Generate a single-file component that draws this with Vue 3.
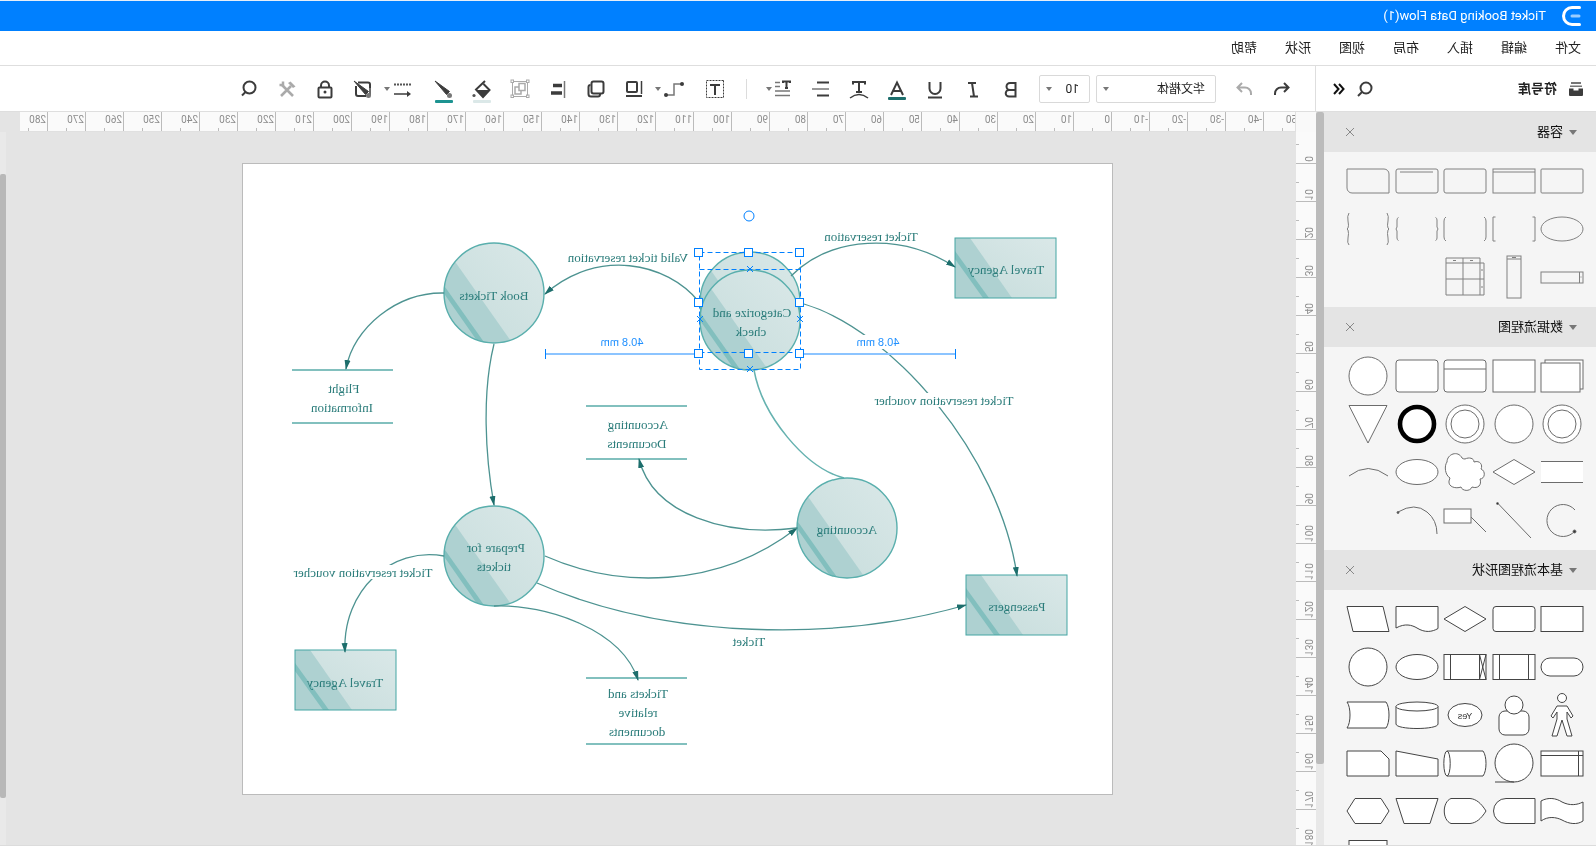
<script setup>
const menus = ['文件', '编辑', '插入', '布局', '视图', '形状', '帮助']

const R = (x, y, w, h, rx = 0) => `<rect x="${x}" y="${y}" width="${w}" height="${h}" rx="${rx}"/>`
const C = (r, x = 24, y = 24) => `<circle cx="${x}" cy="${y}" r="${r}"/>`
const E = (rx, ry, x = 24, y = 24) => `<ellipse cx="${x}" cy="${y}" rx="${rx}" ry="${ry}"/>`
const P = (d) => `<path d="${d}"/>`
const L = (d) => `<path fill="none" d="${d}"/>`

const sections = [
  {
    title: '容器',
    kind: 'hollow',
    shapes: [
      R(3, 12, 42, 24, 1),
      R(3, 12, 42, 24) + L('M3 15H45'),
      R(3, 12, 42, 24, 2),
      R(3, 12, 42, 24, 2) + L('M8 15H41'),
      P('M8 12H45V31a5 5 0 0 1-5 5H3V17a5 5 0 0 1 5-5z'),
      E(21, 12),
      L('M5.500 12H3V36H5.500M42.500 12H45V36H42.500'),
      L('M5 12Q3 13 3 16V32Q3 35 5 36M43 12Q45 13 45 16V32Q45 35 43 36'),
      L('M5.500 12.500Q4 13 4 15V22L3 24L4 26V33Q4 35 5.500 35.500M42.500 12.500Q44 13 44 15V22L45 24L44 26V33Q44 35 42.500 35.500'),
      L('M5 8Q3 11 4 16T4 23L3 24L4 25Q5 28 4 33T5 40M43 8Q45 11 44 16T44 23L45 24L44 25Q43 28 44 33T43 40'),
      R(3, 19, 42, 11) + L('M6.500 19V30M4.500 24h1'),
      R(17, 3, 14, 42) + L('M17 6H31M22 4.500h4'),
      L('M9 5H43V42H5V10H43M9 5V42M26 5V42M5 26H43M16 7.500h3M33 7.500h3M7 16v2M7 33v2'),
    ],
  },
  {
    title: '数据流程图',
    kind: 'soft',
    shapes: [
      R(3, 8, 38, 29) + R(6, 11, 39, 29),
      R(3, 8, 42, 32),
      R(3, 8, 42, 32, 3) + L('M3 17H45'),
      R(3, 8, 42, 32, 3),
      C(19),
      C(19) + C(14),
      C(19),
      C(19) + C(14),
      '<circle cx="24" cy="24" r="17" stroke="#000" stroke-width="4.600"/>',
      P('M5 5.500H43L24 43z'),
      '<rect x="3" y="13" width="42" height="22" stroke="none"/>' + L('M3 13.500H45M3 34.500H45'),
      P('M24 11.500L45 24L24 36.500L3 24z'),
      P('M24 11C20 9 15 10 15 14C9 12 6 17 8 21C3 23 4 31 9 31C7 37 11 41 17 39C19 44 27 43 28 39C33 41 41 39 40 33L39 30C44 27 45 18 42 14C42 6 31 2 27 10Q26 11 24 11z'),
      E(21, 12.5),
      L('M4 28Q24 13 43 28'),
      L('M11 14A16 16 0 1 1 11 35') + '<circle cx="11.500" cy="35.500" r="1.500" fill="#333"/>',
      L('M40 7.500L7 42') + '<circle cx="40.500" cy="7.500" r="1" fill="#333"/>',
      R(18, 13, 27, 14) + L('M18 21L3 36'),
      L('M43 16Q26 6 14 16Q4 24 4 38') + '<circle cx="43" cy="16.500" r="1" fill="#333"/>',
    ],
  },
  {
    title: '基本流程图形状',
    kind: 'strong',
    shapes: [
      R(3, 11.5, 42, 25),
      R(3, 11.5, 42, 25, 3),
      P('M24 11.500L45 24L24 36.500L3 24z'),
      P('M3 11.500H45V33C36 28 29 30 24 33C16 38 9 37 3 33.500z'),
      P('M9 11.500H45L39 36.500H3z'),
      R(3, 15, 42, 18, 9),
      R(3, 11.5, 42, 25) + L('M9.500 11.500V36.500M38.500 11.500V36.500'),
      R(3, 11.5, 42, 25) + L('M9.500 11.500V36.500M38.500 11.500V36.500M3 11.500L9.500 36.500M9.500 11.500L3 36.500'),
      E(21, 12.5),
      C(19),
      P('M19 15H29L35 25L33 27L29 21V28L34 45H29L24 29L19 45H14L19 28V21L15 27L13 25z') + C(4.5, 24, 7),
      R(9, 20, 30, 24, 6) + C(9, 24, 14),
      E(17, 11.5) + '<text x="24" y="28" text-anchor="middle" font-size="9" fill="#333" stroke="none">Yes</text>',
      P('M3 15.500V33C3 39 45 39 45 33V15.500') + E(21, 4.5, 24, 15.5),
      P('M6 11H45C41 16 41 32 45 37H6C2 32 2 16 6 11z'),
      R(3, 12, 42, 25) + L('M7.500 12V37M3 16.500H45'),
      C(19) + L('M24 43H43'),
      P('M6 12H42V37H6C2 32 2 17 6 12z') + E(3.2, 12.5, 42, 24.5),
      P('M3 20L45 12V37H3z'),
      P('M11 12H45V37H3V20z'),
      P('M45 14C38 10 30 11 24 15C16 19 9 18 3 15V34C9 38 17 37 24 33C30 30 38 29 45 34z'),
      P('M3 11.500H32A12.500 12.500 0 0 1 32 36.500H3z'),
      P('M3 24C8 16 13 12 19 11.500H38C47 15 47 33 38 36.500H19C13 36 8 32 3 24z'),
      P('M3 11.500H45L37 36.500H11z'),
      P('M11 11.500H37L45 24L37 36.500H11L3 24z'),
      R(3, 11.5, 42, 25),
      R(3, 11.5, 42, 25),
      R(3, 11.5, 42, 25),
      R(3, 11.5, 42, 25),
      R(5, 5.5, 38, 38),
    ],
  },
]

const brush = '<path d="M21 4L9.500 17.500L6.500 14.500z" fill="#3c3c3c" stroke="#3c3c3c" stroke-width="1"/><circle cx="6.500" cy="18.500" r="2.500" fill="#777" stroke="none"/>'
const textTools = [
  { name: '加粗', art: '<path d="M7.500 6H13a3.500 3.500 0 0 1 0 7H7.500zM7.500 13H14a3.300 3.300 0 0 1 0 6.600H7.500z"/>' },
  { name: '斜体', art: '<path d="M9 6h8M7 19.500h8M13 6l-2 13.500"/>' },
  { name: '下划线', art: '<path d="M6.500 5v6.500a5.500 5.500 0 0 0 11 0V5M5 20.500h14"/>' },
  { name: '字体颜色', art: '<path d="M6 18L12 5.500L18 18M8 14h8"/><rect x="3" y="20" width="18" height="3" rx="1" fill="#1d6e6c" stroke="none"/>' },
  { name: '文字效果', art: '<path d="M6 7.500V5H18V7.500M12 5V15M9 15h6" /><path d="M3 21Q12 14 21 21" stroke-width="1.500"/>' },
  { name: '对齐', art: '<path d="M4 5.500H16M4 18.500H16"/><path d="M4 12H21" stroke="#777" stroke-width="1.500"/>' },
  { name: '行距', caret: true, art: '<path d="M5 6V4.500H12V6M8.500 5V11M7 11h3"/><path d="M15 5.500h5M15 9.500h5M5 14H20M5 18.500H20" stroke="#777" stroke-width="1.500"/>' },
]
const shapeTools = [
  { name: '文本框', art: '<rect x="3.500" y="3.500" width="17" height="17" stroke-width="1" stroke-dasharray="2 1"/><path d="M7 8h10M12 8v10"/>' },
  { name: '连接线', caret: true, wide: true, art: '<path d="M5 7H12V18H19" stroke="#777" stroke-width="1.500"/><circle cx="4" cy="7" r="2" fill="#3c3c3c" stroke="none"/><circle cx="20" cy="18" r="2" fill="#3c3c3c" stroke="none"/>' },
  { name: '层叠', art: '<rect x="9" y="5" width="10" height="10" rx="1"/><path d="M4.500 4V17" stroke-width="1.500"/><path d="M4 19H20"/>' },
  { name: '排列', art: '<rect x="4.500" y="4.500" width="12" height="12" rx="2"/><path d="M8 16.500V17.500a2 2 0 0 0 2 2H17a2.500 2.500 0 0 0 2.500-2.500V10a2 2 0 0 0-2-2"/>' },
  { name: '左对齐', art: '<path d="M5.500 4V21" stroke="#777" stroke-width="1.500"/><path d="M8 8.500H17M8 16H19" stroke-width="3.600"/>' },
  { name: '组合', off: true, art: '<path d="M5.500 4.500H18.500M5.500 19.500H18.500M4.500 5.500V18.500M19.500 5.500V18.500" stroke-width="1"/><rect x="3" y="3" width="2.500" height="2.500" stroke-width="1"/><rect x="18.500" y="3" width="2.500" height="2.500" stroke-width="1"/><rect x="3" y="18" width="2.500" height="2.500" stroke-width="1"/><rect x="18.500" y="18" width="2.500" height="2.500" stroke-width="1"/><rect x="7" y="6.500" width="6" height="7" stroke-width="1.500"/><path d="M13 10H17V17H11V13.500" stroke-width="1.500"/>' },
  { name: '填充', art: '<path d="M9 4L18 12.500L11 20L4.500 13L10.500 7"/><path d="M4 13H18L11 20.500z" fill="#3c3c3c" stroke="none"/><circle cx="20" cy="18.500" r="1.600" fill="#555" stroke="none"/><rect x="3" y="23" width="18" height="3" rx="1" fill="#dbe8e8" stroke="none"/>' },
  { name: '线条颜色', art: brush + '<rect x="3" y="23" width="18" height="3" rx="1" fill="#1d9391" stroke="none"/>' },
  { name: '线条样式', caret: true, wide: true, art: '<path d="M4 7.500H21" stroke-dasharray="2 1" stroke="#555"/><path d="M6 17H21" stroke-width="1.500"/><path d="M4 17L8 14V20z" fill="#3c3c3c" stroke="none"/>' },
  { name: '格式刷', art: '<path d="M17 5.500H7a2 2 0 0 0-2 2V11M19 9V17a2 2 0 0 1-2 2H9"/><path d="M5 11V18M9 19H16" stroke-width="1.500"/>' + brush },
  { name: '锁定', art: '<rect x="5.500" y="10.500" width="13" height="10" rx="1"/><path d="M8 10V8.500a4 4 0 0 1 8 0V10"/><circle cx="12" cy="15" r="1.500" fill="#3c3c3c" stroke="none"/>' },
  { name: '工具', off: true, art: '<path d="M6 19L17 8M8 9L18 19" stroke-width="2.600"/><path d="M3.500 9.500L8.500 4.500L11 6L6 11z" fill="#aaa" stroke="none"/><path d="M16 4.500V8H19.500" stroke-width="2.500"/>' },
  { name: '查找', art: '<circle cx="11.500" cy="10.500" r="6"/><path d="M15.500 15L19 18.500"/>' },
]

const hTicks = Array.from({ length: 34 }, (_, i) => (i - 5) * 10)
const vTicks = Array.from({ length: 19 }, (_, i) => i * 10)

const boxes = [
  { x: 541, y: 238 }, { x: 530, y: 575 }, { x: 1201, y: 650 },
]
const rounds = [
  { x: 1103, y: 293 }, { x: 1103, y: 556 }, { x: 750, y: 528 }, { x: 847, y: 302 }, { x: 847, y: 320 },
]
const stores = [
  { x: 1204, y: 370, h: 53 }, { x: 910, y: 406, h: 53 }, { x: 910, y: 678, h: 66 },
]
const flows = [
  'M806 276C766 236 696 232 642 267',
  'M898 302C930 262 1000 248 1052 294',
  'M1153 293C1200 292 1244 328 1251 369',
  'M1103 344C1115 392 1112 455 1103 505',
  'M1153 556C1205 546 1255 590 1252 652',
  'M1103 606C1050 604 975 630 959 680',
  'M1060 583C930 640 760 642 631 605',
  'M1052 556C980 588 880 590 800 528',
  'M800 528C870 537 944 515 958 459',
  'M793 304C705 330 597 455 580 576',
]
const plates = [
  { x: 583, y: 393, w: 140, h: 14 }, { x: 1163, y: 565, w: 140, h: 14 }, { x: 697, y: 335, w: 44, h: 14 },
]
const labels = [
  [591, 274, 'Travel Agency'], [726, 241, 'Ticket reservation'], [845, 317, 'Categorize and'], [846, 336, 'check'],
  [969, 262, 'Valid ticket reservation'], [1103, 300, 'Book Tickets'], [1253, 393, 'Flight'], [1255, 412, 'Information'],
  [959, 429, 'Accounting'], [960, 448, 'Documents'], [653, 405, 'Ticket reservation voucher'], [750, 534, 'Accounting'],
  [1101, 552, 'Prepare for'], [1103, 571, 'tickets'], [1234, 577, 'Ticket reservation voucher'], [1252, 687, 'Travel Agency'],
  [580, 611, 'Passengers'], [848, 646, 'Ticket'], [959, 698, 'Tickets and'], [959, 717, 'relative'], [960, 736, 'documents'],
]
const handles = [797, 848, 898].flatMap((x) => [252, 302, 353].map((y) => ({ x, y }))).filter((h) => h.x !== 848 || h.y !== 302)
const crosses = [[847, 269], [897, 319], [797, 319], [847, 369]]
</script>

<template>
  <div class="app">
    <header class="titlebar">
      <svg class="logo" width="20" height="20" viewBox="0 0 20 20" fill="none" stroke-width="3" stroke-linecap="round">
        <path d="M1.500 1.500H9a8.500 8.500 0 0 1 0 17H1.500" stroke="#fff" />
        <path d="M2 10H9" stroke="#99ccff" />
      </svg>
      <span>Ticket Booking Data Flow(1)</span>
    </header>

    <nav class="menubar">
      <button v-for="m in menus" :key="m" type="button">{{ m }}</button>
    </nav>

    <div class="tools">
      <div class="library-bar">
        <svg class="drawer" width="14" height="14" viewBox="0 0 14 14" fill="#3c3c3c">
          <path d="M2 0h10v2H2zM1 3.500h12v1.500H1z" fill="#777" />
          <path d="M0 6.500h4.500v2h5v-2H14V13a1 1 0 0 1-1 1H1a1 1 0 0 1-1-1z" />
        </svg>
        <h1>符号库</h1>
        <button type="button" aria-label="搜索符号">
          <svg width="16" height="16" viewBox="0 0 16 16" fill="none" stroke="#3c3c3c" stroke-width="2"><circle cx="7" cy="7" r="5.500" /><path d="M11 11l4 4" /></svg>
        </button>
        <button type="button" aria-label="收起">
          <svg width="12" height="12" viewBox="0 0 12 12" fill="none" stroke="#111" stroke-width="2"><path d="M6 1L1.500 6L6 11M11 1L6.500 6L11 11" /></svg>
        </button>
      </div>
      <div class="toolbar">
        <button type="button" class="tool" aria-label="撤销">
          <svg viewBox="0 0 24 24"><path d="M10 6L5.500 10.500L10 15M5.500 10.500H13a6 6 0 0 1 6 6V18" /></svg>
        </button>
        <button type="button" class="tool off" aria-label="重做">
          <svg viewBox="0 0 24 24"><path d="M14 6L18.500 10.500L14 15M18.500 10.500H11a6 6 0 0 0-6 6V18" /></svg>
        </button>
        <label class="pick family">
          <select aria-label="字体"><option>华文楷体</option></select><i class="caret"></i>
        </label>
        <label class="pick size">
          <select aria-label="字号"><option>10</option></select><i class="caret"></i>
        </label>
        <button v-for="t in textTools" :key="t.name" type="button" class="tool" :aria-label="t.name">
          <svg viewBox="0 0 24 24" v-html="t.art"></svg><i v-if="t.caret" class="caret"></i>
        </button>
        <span class="divider"></span>
        <button v-for="t in shapeTools" :key="t.name" type="button" class="tool" :class="{ off: t.off, wide: t.wide }" :aria-label="t.name">
          <svg viewBox="0 0 24 24" v-html="t.art"></svg><i v-if="t.caret" class="caret"></i>
        </button>
      </div>
    </div>

    <main class="work">
      <aside class="library">
        <div class="library-list">
          <section v-for="s in sections" :key="s.title">
            <div class="section-head">
              <button type="button" class="fold"><i class="caret"></i>{{ s.title }}</button>
              <button type="button" class="close" aria-label="关闭">
                <svg width="8" height="8" viewBox="0 0 8 8" stroke="#888"><path d="M0 0L8 8M8 0L0 8" /></svg>
              </button>
            </div>
            <div class="shapes" :class="s.kind">
              <svg v-for="(a, i) in s.shapes" :key="i" width="48" height="48" viewBox="0 0 48 48" v-html="a"></svg>
            </div>
          </section>
        </div>
        <div class="rail"><div class="library-thumb"></div></div>
      </aside>

      <div class="ruler-corner"></div>
      <div class="ruler-h">
        <span v-for="n in hTicks" :key="n"><b>{{ n }}</b></span>
      </div>
      <div class="ruler-v">
        <span v-for="n in vTicks" :key="n"><b>{{ n }}</b></span>
      </div>

      <div class="canvas">
        <svg class="page" width="869" height="630" viewBox="485 164 869 630">
          <defs>
            <linearGradient id="glass" x1="0" y1="0" x2="1" y2="1"><stop offset="0" stop-color="#dae8e8" /><stop offset="1" stop-color="#c5dcdb" /></linearGradient>
            <clipPath id="disc"><circle r="50" /></clipPath>
            <marker id="tip" orient="auto" markerUnits="userSpaceOnUse" markerWidth="12" markerHeight="8" refX="9" refY="4"><path d="M0 1L10 4L0 7z" fill="#1d6e6c" /></marker>
          </defs>

          <path d="M843 370C835 415 792 468 753 478" fill="none" stroke="#66b2b0" stroke-width="1.500" />
          <g v-for="(b, i) in boxes" :key="'b' + i" :transform="`translate(${b.x} ${b.y})`">
            <rect width="101" height="60" fill="url(#glass)" />
            <path d="M86 0H101V60H44z" fill="#aed1d1" />
            <path d="M101 13V21L73 60H67z" fill="#82bfbe" />
            <rect width="101" height="60" fill="none" stroke="#45a5a3" />
          </g>
          <g v-for="(c, i) in rounds" :key="'c' + i" :transform="`translate(${c.x} ${c.y})`">
            <circle r="50" fill="url(#glass)" />
            <g clip-path="url(#disc)">
              <path d="M38 -30L51 -48V51H-19z" fill="#aed1d1" />
              <path d="M51 -9V-1L14 52H8z" fill="#82bfbe" />
            </g>
            <circle r="50" fill="none" stroke="#5aafad" stroke-width="1.400" />
          </g>
          <path v-for="(s, i) in stores" :key="'s' + i" :d="`M${s.x} ${s.y}h101m0 ${s.h}h-101`" stroke="#5aaca9" stroke-width="1.400" fill="none" />
          <path v-for="(f, i) in flows" :key="'f' + i" :d="f" fill="none" stroke="#4d9391" stroke-width="1.300" marker-end="url(#tip)" />

          <g stroke="#8cc4ff" stroke-width="2"><path d="M641 354H793M902 354H1051" /></g>
          <g stroke="#0080ff"><path d="M641.500 349V359M1051.500 349V359" /></g>
          <rect v-for="(p, i) in plates" :key="'p' + i" :x="p.x" :y="p.y" :width="p.w" :height="p.h" fill="#fff" />
          <text v-for="(l, i) in labels" :key="'l' + i" class="label" :x="l[0]" :y="l[1]">{{ l[2] }}</text>
          <text class="measure" x="719" y="346">40.8 mm</text>
          <text class="measure" x="975" y="346">40.8 mm</text>

          <g fill="none" stroke="#0080ff">
            <path d="M796.500 252.500H897.500V369.500H796.500zM796.500 269.500H897.500M796.500 352.500H897.500" stroke-dasharray="5 3" />
            <path v-for="(c, i) in crosses" :key="'x' + i" :d="`M${c[0] - 3} ${c[1] - 3}l6 6m0-6l-6 6`" />
            <circle cx="848" cy="216" r="5" fill="#fff" />
            <rect v-for="(h, i) in handles" :key="'h' + i" :x="h.x - 3.5" :y="h.y - 3.5" width="8" height="8" fill="#fff" />
          </g>
        </svg>
      </div>
      <div class="canvas-rail"><div class="canvas-thumb"></div></div>
    </main>
  </div>
</template>

<style>
html, body { margin: 0; background: #fff; overflow: hidden; }
</style>

<style scoped>
.app {
  display: flex;
  flex-direction: column;
  box-sizing: border-box;
  height: 100vh;
  border-top: 1px solid #e6eef8;
  border-bottom: 1px solid #dcdcdc;
  transform: scaleX(-1);
  color: #222;
  font: 13px/16px Roboto, "Noto Sans CJK SC", sans-serif;
}
button { padding: 0; border: 0; background: none; color: inherit; font: inherit; }
.titlebar {
  display: flex;
  align-items: center;
  gap: 15px;
  height: 30px;
  padding-left: 15px;
  background: #0080ff;
  color: #fff;
}
.menubar {
  display: flex;
  align-items: center;
  gap: 28px;
  height: 34px;
  padding-left: 15px;
  border-bottom: 1px solid #dedede;
}
.tools { display: flex; height: 45px; border-bottom: 1px solid #dedede; }
.library-bar {
  display: flex;
  align-items: center;
  box-sizing: border-box;
  width: 281px;
  padding: 0 17px 0 13px;
  border-right: 1px solid #dedede;
}
.library-bar h1 { flex: 1; margin: 0 0 0 12px; font-size: 13px; font-weight: 700; }
.library-bar button { display: flex; margin-left: 12px; }
.toolbar { display: flex; align-items: center; flex: 1; padding-left: 14px; }
.tool { position: relative; display: flex; align-items: center; justify-content: center; flex: none; width: 38px; height: 30px; }
.tool.wide { width: 43px; }
.tool svg { width: 24px; height: 24px; overflow: visible; fill: none; stroke: #3c3c3c; stroke-width: 2; }
.tool.off svg { stroke: #aaa; }
.caret { width: 0; height: 0; border: 4px solid transparent; border-top: 5px solid #777; border-bottom: 0; }
.toolbar .caret { border-width: 4px 3px 0; }
.tool .caret { position: absolute; right: 2px; top: 13px; }
.pick {
  display: flex;
  align-items: center;
  box-sizing: border-box;
  height: 28px;
  padding: 0 6px 0 10px;
  border: 1px solid #d9d9d9;
  border-radius: 2px;
}
.family { width: 120px; margin-left: 9px; }
.size { width: 51px; margin: 0 9px 0 6px; }
.pick select { flex: 1; width: 20px; appearance: none; padding: 0; border: 0; background: none; color: #222; font: 12px/16px Roboto, "Noto Sans CJK SC", sans-serif; }
.divider { width: 1px; height: 20px; margin: 0 12px 0 17px; background: #dcdcdc; }

.work {
  display: grid;
  grid-template: 20px minmax(0, 1fr) / 280px 20px minmax(0, 1fr) 6px;
  flex: 1;
  min-height: 0;
}
.library { grid-row: 1 / 3; display: flex; min-height: 0; overflow: hidden; background: #f5f5f5; }
.library-list { flex: 1; overflow: hidden; }
.rail { width: 8px; background: #e8e8e8; }
.library-thumb { height: 89%; border-radius: 2px; background: #bbb; }
.section-head {
  display: flex;
  align-items: center;
  justify-content: space-between;
  height: 40px;
  padding: 0 22px 0 19px;
  background: #e4e4e4;
}
.fold { display: flex; align-items: center; gap: 6px; color: #111; }
.close { display: flex; }
.shapes { display: grid; grid-template-columns: repeat(5, 1fr); padding: 5px 20px 6px 10px; }
.shapes svg { stroke-width: 1; font-family: "Liberation Sans", sans-serif; }
.hollow svg { fill: none; stroke: #808080; }
.soft svg { fill: #fff; stroke: #6c6c6c; }
.strong svg { fill: #fff; stroke: #444; }

.ruler-corner { background: #f9f9f9; }
.ruler-h, .ruler-v { display: flex; overflow: hidden; background: #fafafa; color: #8c8c8c; font: 10px/12px Roboto, sans-serif; }
.ruler-h { margin-right: 14px; border-bottom: 1px solid #e0e0e0; border-left: 1px solid #e0e0e0; }
.ruler-h b, .ruler-v b { font-weight: 400; }
.ruler-h span { position: relative; flex: none; box-sizing: border-box; width: 38px; padding: 2px 0 0 1px; border-left: 1px solid #bbb; }
.ruler-h span:first-child { margin-left: -7px; }
.ruler-h span::after { content: ""; position: absolute; left: 18px; bottom: 0; width: 1px; height: 3px; background: #bbb; }
.ruler-v { grid-column: 2; grid-row: 2; flex-direction: column; }
.ruler-v span { position: relative; flex: none; display: flex; align-items: flex-end; box-sizing: border-box; height: 38px; padding: 0 0 1px 2px; border-bottom: 1px solid #bbb; }
.ruler-v span:first-child { margin-top: -6px; }
.ruler-v b { writing-mode: vertical-rl; transform: rotate(180deg); }
.ruler-v span::after { content: ""; position: absolute; right: 0; top: 18px; width: 3px; height: 1px; background: #bbb; }
.work, .canvas { background: #e4e4e4; }
.canvas { grid-column: 3; grid-row: 2; overflow: hidden; padding: 31px 0 0 183px; }
.page { display: block; background: #fff; border: 1px solid #bbb; }
.canvas-rail { grid-column: 4; grid-row: 2; padding-top: 42px; background: #e9e9e9; }
.canvas-thumb { height: 93%; border-radius: 2px; background: #b8b8b8; }
.label { font: 13px "Liberation Serif", serif; fill: #2a7c7a; text-anchor: middle; }
.measure { font: 11px "Liberation Sans", sans-serif; fill: #2090ff; text-anchor: middle; }
</style>
